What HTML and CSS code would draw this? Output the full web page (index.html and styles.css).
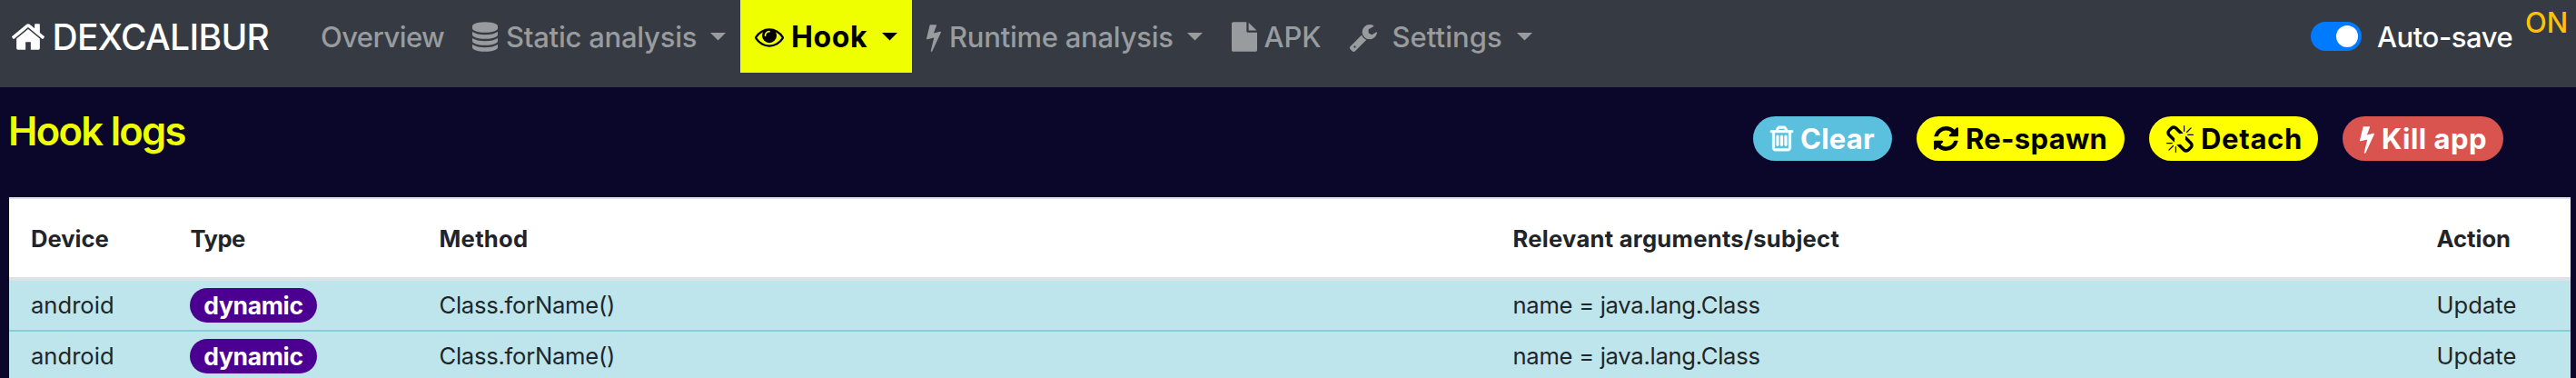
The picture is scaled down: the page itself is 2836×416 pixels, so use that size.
FILE: index.html
```html
<!DOCTYPE html>
<html lang="en">
<head>
<meta charset="utf-8">
<title>Dexcalibur - Hook logs</title>
<link rel="stylesheet" href="styles.css">
</head>
<body>
<svg class="sprite" aria-hidden="true">
  <symbol id="bolt" viewBox="448 128 896 1664"><path d="M1333 566q18 20 7 44l-540 1157q-13 25-42 25-4 0-14-2-17-5-25.500-19t-4.500-30l197-808-406 101q-4 1-12 1-18 0-31-11-18-15-13-39l201-825q4-14 16-23t28-9h328q19 0 32 12.500t13 29.500q0 8-5 18l-171 463 396-98q8-2 12-2 19 0 34 15z"/></symbol>
</svg>
<header class="navbar">
  <a class="brand">
    <svg class="icon icon-home" viewBox="89 256 1614 1280"><path d="M1472 992v480q0 26-19 45t-45 19h-384v-384h-256v384h-384q-26 0-45-19t-19-45v-480q0-1 .5-3t.5-3l575-474 575 474q1 2 1 6zm223-69l-62 74q-8 9-21 11h-3q-13 0-21-7l-692-577-692 577q-12 8-24 7-13-2-21-11l-62-74q-8-10-7-23.500t11-21.500l719-599q32-26 76-26t76 26l244 204v-195q0-14 9-23t23-9h192q14 0 23 9t9 23v408l219 182q10 8 11 21.500t-7 23.500z"/></svg>
    <span>DEXCALIBUR</span>
  </a>
  <nav class="menu">
    <a class="item overview"><span>Overview</span></a>
    <a class="item static">
      <svg class="icon icon-db" viewBox="128 0 1536 1792"><path d="M896 768q237 0 443-43t325-127v170q0 69-103 128t-280 93.500-385 34.500-385-34.500-280-93.500-103-128v-170q119 84 325 127t443 43zm0 768q237 0 443-43t325-127v170q0 69-103 128t-280 93.500-385 34.500-385-34.500-280-93.500-103-128v-170q119 84 325 127t443 43zm0-384q237 0 443-43t325-127v170q0 69-103 128t-280 93.500-385 34.500-385-34.500-280-93.500-103-128v-170q119 84 325 127t443 43zm0-1152q208 0 385 34.500t280 93.500 103 128v128q0 69-103 128t-280 93.500-385 34.500-385-34.500-280-93.500-103-128v-128q0-69 103-128t280-93.500 385-34.500z"/></svg>
      <span>Static analysis</span><i class="caret"></i>
    </a>
    <a class="item hook">
      <svg class="icon icon-eye" viewBox="0 384 1792 1152"><path d="M1664 960q-152-236-381-353 61 104 61 225 0 185-131.500 316.500t-316.500 131.500-316.500-131.500-131.500-316.500q0-121 61-225-229 117-381 353 133 205 333.500 326.500t434.500 121.500 434.500-121.500 333.500-326.500zm-720-384q0-20-14-34t-34-14q-125 0-214.500 89.500t-89.500 214.500q0 20 14 34t34 14 34-14 14-34q0-86 61-147t147-61q20 0 34-14t14-34zm848 384q0 34-20 69-140 230-376.500 368.500t-499.500 138.500-499.500-139-376.500-368q-20-35-20-69t20-69q140-229 376.500-368t499.500-139 499.500 139 376.500 368q20 35 20 69z"/></svg>
      <span>Hook</span><i class="caret"></i>
    </a>
    <a class="item runtime">
      <svg class="icon icon-bolt"><use href="#bolt"/></svg>
      <span>Runtime analysis</span><i class="caret"></i>
    </a>
    <a class="item apk">
      <svg class="icon icon-db" viewBox="128 0 1536 1792"><path d="M1152 512v-472q22 14 36 28l408 408q14 14 28 36h-472zm-128 32q0 40 28 68t68 28h544v1056q0 40-28 68t-68 28h-1344q-40 0-68-28t-28-68v-1600q0-40 28-68t68-28h800v544z"/></svg>
      <span>APK</span>
    </a>
    <a class="item settings">
      <svg class="icon icon-wrench" viewBox="85 128 1641 1643"><path d="M448 1472q0-26-19-45t-45-19-45 19-19 45 19 45 45 19 45-19 19-45zm644-420l-682 682q-37 37-90 37-52 0-91-37l-106-108q-38-36-38-90 0-53 38-91l681-681q39 98 114.500 173.500t173.500 114.500zm634-435q0 39-23 106-47 134-164.500 217.500t-258.500 83.500q-185 0-316.500-131.500t-131.500-316.500 131.500-316.500 316.500-131.500q58 0 121.500 16.500t107.500 46.500q16 11 16 28t-16 28l-293 169v224l193 107q5-3 79-48.500t135.500-81 70.500-35.500q15 0 23.500 10t8.500 25z"/></svg>
      <span>Settings</span><i class="caret"></i>
    </a>
  </nav>
  <div class="autosave">
    <span class="switch"><i class="knob"></i></span>
    <span class="label">Auto-save</span>
    <span class="state">ON</span>
  </div>
</header>
<main>
  <div class="titlebar">
    <h1>Hook logs</h1>
    <div class="actions">
      <button class="btn clear">
        <svg class="icon icon-trash" viewBox="192 128 1408 1536"><path d="M704 736v576q0 14-9 23t-23 9h-64q-14 0-23-9t-9-23v-576q0-14 9-23t23-9h64q14 0 23 9t9 23zm256 0v576q0 14-9 23t-23 9h-64q-14 0-23-9t-9-23v-576q0-14 9-23t23-9h64q14 0 23 9t9 23zm256 0v576q0 14-9 23t-23 9h-64q-14 0-23-9t-9-23v-576q0-14 9-23t23-9h64q14 0 23 9t9 23zm128 724v-948h-896v948q0 22 7 40.500t14.500 27 10.500 8.500h832q3 0 10.500-8.500t14.500-27 7-40.500zm-672-1076h448l-48-117q-7-9-17-11h-317q-10 2-17 11zm928 32v64q0 14-9 23t-23 9h-96v948q0 83-47 143.500t-113 60.500h-832q-66 0-113-58.500t-47-141.500v-952h-96q-14 0-23-9t-9-23v-64q0-14 9-23t23-9h309l70-167q15-37 54-63t79-26h320q40 0 79 26t54 63l70 167h309q14 0 23 9t9 23z"/></svg>
        <span>Clear</span>
      </button>
      <button class="btn respawn">
        <svg class="icon icon-refresh" viewBox="128 128 1536 1536"><path d="M1639 1056q0 5-1 7-64 268-268 434.500t-478 166.500q-146 0-282.500-55t-243.500-157l-129 129q-19 19-45 19t-45-19-19-45v-448q0-26 19-45t45-19h448q26 0 45 19t19 45-19 45l-137 137q71 66 161 102t187 36q134 0 250-65t186-179q11-17 53-117 8-23 30-23h192q13 0 22.500 9.500t9.500 22.500zm25-800v448q0 26-19 45t-45 19h-448q-26 0-45-19t-19-45 19-45l138-138q-148-137-349-137-134 0-250 65t-186 179q-11 17-53 117-8 23-30 23h-199q-13 0-22.500-9.500t-9.500-22.500v-7q65-268 270-434.500t480-166.500q146 0 284 55.500t245 156.500l130-129q19-19 45-19t45 19 19 45z"/></svg>
        <span>Re-spawn</span>
      </button>
      <button class="btn detach">
        <svg class="icon icon-unlink" viewBox="64 0 1664 1664"><path d="M503 1271l-256 256q-10 9-23 9-12 0-23-9-9-10-9-23t9-23l256-256q10-9 23-9t23 9q9 10 9 23t-9 23zm169 41v320q0 14-9 23t-23 9-23-9-9-23v-320q0-14 9-23t23-9 23 9 9 23zm-224-224q0 14-9 23t-23 9h-320q-14 0-23-9t-9-23 9-23 23-9h320q14 0 23 9t9 23zm1264 128q0 120-85 203l-147 146q-83 83-203 83-121 0-204-85l-334-335q-21-21-42-56l239-18 273 274q28 28 68 27.500t68-27.500l147-146q28-28 28-67 0-40-28-68l-274-275 18-239q35 21 56 42l336 336q84 86 84 204zm-617-724l-239 18-273-274q-28-28-68-28-39 0-68 27l-147 146q-28 28-28 67 0 40 28 68l274 274-18 240q-35-21-56-42l-336-336q-84-86-84-204 0-120 85-203l147-146q83-83 203-83 121 0 204 85l334 335q21 21 42 56zm633 84q0 14-9 23t-23 9h-320q-14 0-23-9t-9-23 9-23 23-9h320q14 0 23 9t9 23zm-544-544v320q0 14-9 23t-23 9-23-9-9-23v-320q0-14 9-23t23-9 23 9 9 23zm407 151l-256 256q-11 9-23 9t-23-9q-9-10-9-23t9-23l256-256q10-9 23-9t23 9q9 10 9 23t-9 23z"/></svg>
        <span>Detach</span>
      </button>
      <button class="btn kill">
        <svg class="icon icon-bolt"><use href="#bolt"/></svg>
        <span>Kill app</span>
      </button>
    </div>
  </div>
  <div class="table">
    <div class="row head">
      <div class="h-device">Device</div><div class="h-type">Type</div><div class="h-method">Method</div><div class="h-args">Relevant arguments/subject</div><div>Action</div>
    </div>
    <div class="row">
      <div class="device">android</div><div><span class="badge">dynamic</span></div><div class="method">Class.forName()</div><div class="args">name = java.lang.Class</div><div>Update</div>
    </div>
    <div class="row">
      <div class="device">android</div><div><span class="badge">dynamic</span></div><div class="method">Class.forName()</div><div class="args">name = java.lang.Class</div><div>Update</div>
    </div>
  </div>
</main>
</body>
</html>
```
FILE: styles.css
```css
* { box-sizing: border-box; }
html, body { height: 416px; overflow: hidden; }
body {
  margin: 0;
  background: #0b072b;
  color: #212529;
  font-family: Inter, "Liberation Sans", sans-serif;
}
.sprite { position: absolute; width: 0; height: 0; }
.icon { display: block; flex: none; fill: currentColor; overflow: visible; }

/* Top navigation */
.navbar {
  display: flex;
  align-items: flex-start;
  height: 96px;
  background: #363a42;
  line-height: 81.5px;
  white-space: nowrap;
}
.brand {
  display: flex;
  align-items: center;
  gap: 9px;
  width: 353px;
  height: 81px;
  padding-left: 12.500px;
  color: #fff;
  font-size: 39px;
  font-weight: 450;
  letter-spacing: -.65px;
}
.menu { display: flex; color: #999c9f; font-size: 31px; font-weight: 450; }
.item { display: flex; align-items: center; height: 80px; line-height: 83px; }
.item .icon { margin-top: 1px; }
.caret {
  width: 18px;
  height: 9px;
  background: currentColor;
  clip-path: polygon(0 0, 100% 0, 50% 100%);
}
.overview { width: 167px; letter-spacing: -.56px; }
.static { width: 295px; letter-spacing: -.24px; }
.static span { width: 224.500px; margin-left: 9px; }
.hook {
  width: 189px;
  padding-left: 16px;
  background: #efff00;
  color: #000;
  font-size: 32px;
  font-weight: 700;
  letter-spacing: .6px;
}
.hook .icon { margin-top: 3px; }
.hook span { width: 99.500px; margin-left: 8px; }
.runtime { width: 351.500px; padding-left: 16px; letter-spacing: -.25px; }
.runtime .icon { margin-top: 4px; }
.runtime span { width: 261.500px; margin-left: 9px; }
.apk { width: 130px; letter-spacing: -.1px; }
.apk span { margin-left: 8px; }
.settings { letter-spacing: .05px; }
.settings .icon { margin-top: 3px; }
.settings span { width: 137px; margin-left: 17px; }

.icon-home { width: 36px; height: 29px; }
.icon-db { width: 28px; height: 33px; }
.icon-eye { width: 32px; height: 21px; }
.icon-bolt { width: 16px; height: 30px; }
.icon-wrench { width: 30px; height: 30px; }
.icon-trash { width: 25px; height: 27px; stroke: currentColor; stroke-width: 50px; }
.icon-refresh { width: 27px; height: 27px; }
.icon-unlink { width: 30px; height: 30px; }

.autosave {
  display: flex;
  margin-left: auto;
  padding-right: 8px;
  color: #fff;
  font-size: 31px;
  font-weight: 450;
}
.switch {
  display: flex;
  justify-content: flex-end;
  width: 56px;
  height: 32px;
  margin-top: 24px;
  padding: 4px;
  border-radius: 16px;
  background: #007bff;
}
.knob { width: 24px; height: 24px; border-radius: 50%; background: #fff; }
.label { width: 163px; margin-left: 17px; letter-spacing: -.42px; }
.state { width: 48px; color: #ffc107; line-height: 50px; }

/* Title and actions */
.titlebar {
  display: flex;
  justify-content: space-between;
  height: 121px;
  padding: 0 80px 0 9px;
}
h1 {
  margin: 18px 0 0;
  color: #efff00;
  font-size: 43.500px;
  font-weight: 560;
  line-height: 60px;
  letter-spacing: -1.700px;
}
.actions { display: flex; gap: 27px; padding-top: 32px; }
.btn {
  display: flex;
  align-items: center;
  gap: 8px;
  height: 49px;
  padding: 0 0 0 19px;
  border: 0;
  border-radius: 25px;
  font: 700 31px/49px Inter, "Liberation Sans", sans-serif;
  white-space: nowrap;
}
.clear { width: 153px; background: #5bc0de; color: #fff; letter-spacing: .22px; }
.respawn { width: 229px; background: #ff0; color: #000; letter-spacing: .3px; }
.detach { width: 186px; background: #ff0; color: #000; letter-spacing: .68px; }
.kill { width: 177px; background: #d9534f; color: #fff; letter-spacing: .48px; }
.kill .icon { margin-top: 2px; }

/* Log table */
.table {
  width: 2820px;
  margin-left: 10px;
  border-top: 2px solid #dee2e6;
  background: #fff;
  font-size: 25.600px;
}
.row {
  display: grid;
  grid-template-columns: 176px 274px 1182px 1017px 171px;
  align-items: center;
  height: 56px;
  border-bottom: 2px solid #86cfda;
  background: #bee5eb;
  line-height: 54px;
}
.row > div { padding-left: 23.500px; }
.row > .device, .row > .h-device { padding-left: 24px; }
.head {
  height: 90px;
  padding-top: 1px;
  border-bottom: 4px solid #dee2e6;
  background: #fff;
  font-weight: 700;
}
.h-type { letter-spacing: -.5px; }
.h-method, .h-args { letter-spacing: .27px; }
.method { letter-spacing: -.26px; }
.args { letter-spacing: -.28px; }
.badge {
  display: block;
  width: 140px;
  height: 38px;
  margin-left: -.5px;
  border-radius: 19px;
  background: #4b0092;
  color: #fff;
  font-size: 26.500px;
  font-weight: 700;
  line-height: 38px;
  letter-spacing: -.36px;
  text-align: center;
}
```
